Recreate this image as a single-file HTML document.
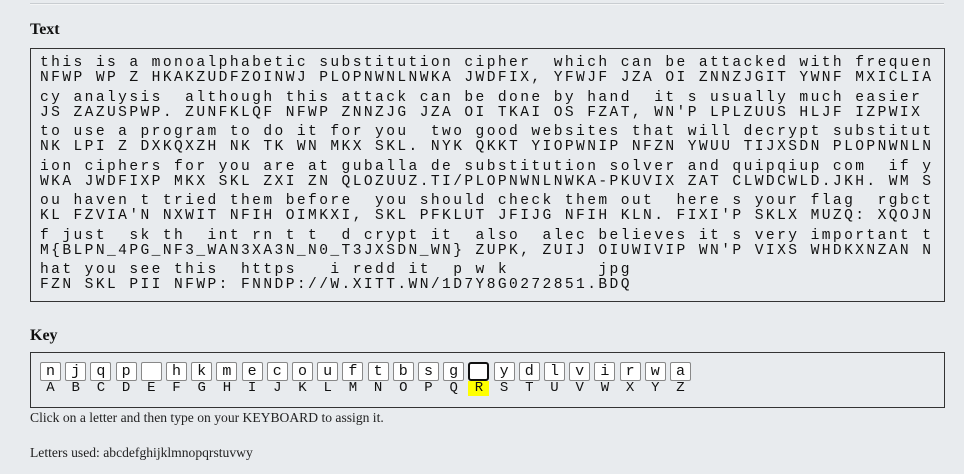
<!DOCTYPE html>
<html><head><meta charset="utf-8"><style>
body{margin:0;background:#e8ebee;width:964px;height:474px;overflow:hidden;font-family:"Liberation Serif",serif;color:#222}
.rule{position:absolute;left:30px;top:3px;width:914px;height:1px;background:#c9cdd1;border-bottom:1px solid #f4f5f6}
h3{position:absolute;left:30px;margin:0;font-size:16px;font-weight:bold;color:#111}
.tb{position:absolute;left:30px;top:48px;width:915px;height:254px;border:1px solid #333;box-sizing:border-box}
.pair{position:absolute;left:9px;font-family:"Liberation Mono",monospace;font-size:14.6px;letter-spacing:2.41px;line-height:15px;white-space:pre;color:#111}
.kb{position:absolute;left:30px;top:352px;width:915px;height:56px;border:1px solid #333;box-sizing:border-box}
.k{position:absolute;top:9px;width:21px;height:19px;background:#fff;border:1px solid #888;border-radius:2px;box-sizing:border-box;font-family:"Liberation Mono",monospace;font-size:15px;text-align:center;line-height:17px;color:#111}
.k.sel{border:2px solid #111;border-radius:3px}
.l{position:absolute;top:28px;width:21px;height:15px;font-family:"Liberation Mono",monospace;font-size:14px;text-align:center;line-height:15px;color:#111}
.l.hl{background:#ffff00}
.p{position:absolute;left:30px;font-size:13.6px;color:#222}
</style></head><body>
<div class="rule"></div>
<h3 style="top:21px">Text</h3>
<div class="tb">
<div class="pair" style="top:7px">this is a monoalphabetic substitution cipher  which can be attacked with frequen
NFWP WP Z HKAKZUDFZOINWJ PLOPNWNLNWKA JWDFIX, YFWJF JZA OI ZNNZJGIT YWNF MXICLIA</div>
<div class="pair" style="top:42px">cy analysis  although this attack can be done by hand  it s usually much easier
JS ZAZUSPWP. ZUNFKLQF NFWP ZNNZJG JZA OI TKAI OS FZAT, WN'P LPLZUUS HLJF IZPWIX</div>
<div class="pair" style="top:76px">to use a program to do it for you  two good websites that will decrypt substitut
NK LPI Z DXKQXZH NK TK WN MKX SKL. NYK QKKT YIOPWNIP NFZN YWUU TIJXSDN PLOPNWNLN</div>
<div class="pair" style="top:111px">ion ciphers for you are at guballa de substitution solver and quipqiup com  if y
WKA JWDFIXP MKX SKL ZXI ZN QLOZUUZ.TI/PLOPNWNLNWKA-PKUVIX ZAT CLWDCWLD.JKH. WM S</div>
<div class="pair" style="top:145px">ou haven t tried them before  you should check them out  here s your flag  rgbct
KL FZVIA'N NXWIT NFIH OIMKXI, SKL PFKLUT JFIJG NFIH KLN. FIXI'P SKLX MUZQ: XQOJN</div>
<div class="pair" style="top:180px">f just  sk th  int rn t t  d crypt it  also  alec believes it s very important t
M{BLPN_4PG_NF3_WAN3XA3N_N0_T3JXSDN_WN} ZUPK, ZUIJ OIUWIVIP WN'P VIXS WHDKXNZAN N</div>
<div class="pair" style="top:214px">hat you see this  https   i redd it  p w k        jpg
FZN SKL PII NFWP: FNNDP://W.XITT.WN/1D7Y8G0272851.BDQ</div>
</div>
<h3 style="top:327px">Key</h3>
<div class="kb" id="kb"></div>
<div class="p" style="top:410px">Click on a letter and then type on your KEYBOARD to assign it.</div>
<div class="p" style="top:445px">Letters used: abcdefghijklmnopqrstuvwy</div>
<script>
var v="njqp hkmecouftbsg ydlvirwa",A="ABCDEFGHIJKLMNOPQRSTUVWXYZ",h="";
for(var i=0;i<26;i++){var x=9+i*25.2;var c=v[i]==" "?"":v[i];
h+='<div class="k'+(i==17?' sel':'')+'" style="left:'+x+'px">'+c+'</div><div class="l'+(i==17?' hl':'')+'" style="left:'+x+'px">'+A[i]+'</div>';}
document.getElementById("kb").innerHTML=h;
</script>
</body></html>
